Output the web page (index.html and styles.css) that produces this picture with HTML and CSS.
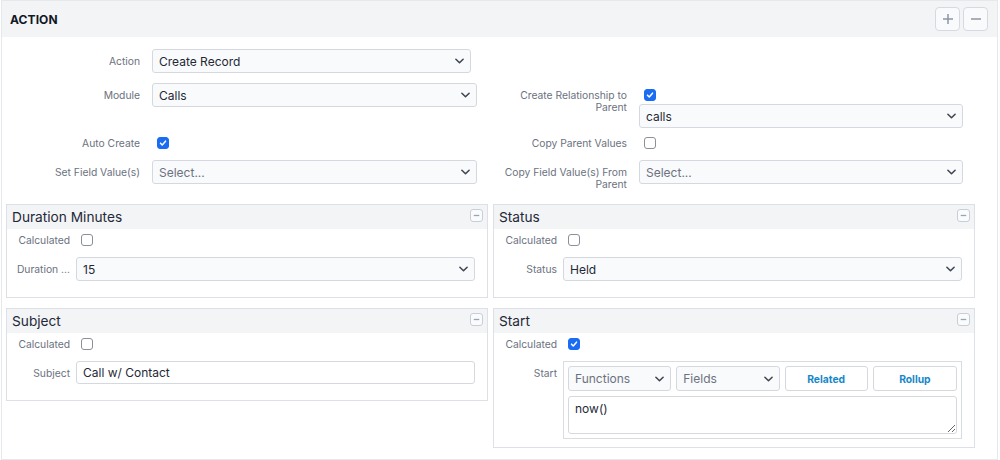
FILE: index.html
```html
<!DOCTYPE html>
<html>
<head>
<meta charset="utf-8">
<link rel="stylesheet" href="styles.css">
</head>
<body>
<div class="action">
  <div class="action-head">
    <div class="action-title">ACTION</div>
    <div class="head-btns">
      <span class="hbtn"><svg width="12" height="12" viewBox="0 0 12 12"><path d="M6 1v10M1 6h10" stroke="#8d96a5" stroke-width="1.5" fill="none"/></svg></span>
      <span class="hbtn"><svg width="12" height="12" viewBox="0 0 12 12"><path d="M1 6h10" stroke="#8d96a5" stroke-width="1.5" fill="none"/></svg></span>
    </div>
  </div>

  <div class="form">
    <div class="lbl">Action</div>
    <div class="ctl"><div class="select narrow"><span>Create Record</span><svg class="chev" viewBox="0 0 10 6"><polyline points="1,1 5,5 9,1"/></svg></div></div>
    <div></div>
    <div></div>

    <div class="lbl">Module</div>
    <div class="ctl"><div class="select"><span>Calls</span><svg class="chev" viewBox="0 0 10 6"><polyline points="1,1 5,5 9,1"/></svg></div></div>
    <div class="lbl rl">Create Relationship to Parent</div>
    <div class="ctl stack">
      <span class="cb on"><svg viewBox="0 0 12 12"><polyline points="3,6.2 5.1,8.3 9,3.8"/></svg></span>
      <div class="select after-cb"><span>calls</span><svg class="chev" viewBox="0 0 10 6"><polyline points="1,1 5,5 9,1"/></svg></div>
    </div>

    <div class="lbl">Auto Create</div>
    <div class="ctl"><span class="cb on top6"><svg viewBox="0 0 12 12"><polyline points="3,6.2 5.1,8.3 9,3.8"/></svg></span></div>
    <div class="lbl rl">Copy Parent Values</div>
    <div class="ctl"><span class="cb top6"></span></div>

    <div class="lbl">Set Field Value(s)</div>
    <div class="ctl"><div class="select"><span class="ph">Select...</span><svg class="chev" viewBox="0 0 10 6"><polyline points="1,1 5,5 9,1"/></svg></div></div>
    <div class="lbl rl">Copy Field Value(s) From Parent</div>
    <div class="ctl"><div class="select"><span class="ph">Select...</span><svg class="chev" viewBox="0 0 10 6"><polyline points="1,1 5,5 9,1"/></svg></div></div>
  </div>

  <div class="panels">
    <div class="panel simple">
      <div class="panel-head"><span class="panel-title">Duration Minutes</span><span class="mini"><svg viewBox="0 0 12 12"><path d="M3 6h6" stroke="#9aa3b0" stroke-width="1.4"/></svg></span></div>
      <div class="pbody">
        <div class="lbl tight">Calculated</div>
        <div class="ctl"><span class="cb"></span></div>
        <div class="lbl">Duration ...</div>
        <div class="ctl"><div class="select"><span>15</span><svg class="chev" viewBox="0 0 10 6"><polyline points="1,1 5,5 9,1"/></svg></div></div>
      </div>
    </div>

    <div class="panel simple">
      <div class="panel-head"><span class="panel-title">Status</span><span class="mini"><svg viewBox="0 0 12 12"><path d="M3 6h6" stroke="#9aa3b0" stroke-width="1.4"/></svg></span></div>
      <div class="pbody">
        <div class="lbl tight">Calculated</div>
        <div class="ctl"><span class="cb"></span></div>
        <div class="lbl">Status</div>
        <div class="ctl"><div class="select"><span>Held</span><svg class="chev" viewBox="0 0 10 6"><polyline points="1,1 5,5 9,1"/></svg></div></div>
      </div>
    </div>

    <div class="panel simple">
      <div class="panel-head"><span class="panel-title">Subject</span><span class="mini"><svg viewBox="0 0 12 12"><path d="M3 6h6" stroke="#9aa3b0" stroke-width="1.4"/></svg></span></div>
      <div class="pbody">
        <div class="lbl tight">Calculated</div>
        <div class="ctl"><span class="cb"></span></div>
        <div class="lbl">Subject</div>
        <div class="ctl"><div class="textinput">Call w/ Contact</div></div>
      </div>
    </div>

    <div class="panel">
      <div class="panel-head"><span class="panel-title">Start</span><span class="mini"><svg viewBox="0 0 12 12"><path d="M3 6h6" stroke="#9aa3b0" stroke-width="1.4"/></svg></span></div>
      <div class="pbody">
        <div class="lbl tight">Calculated</div>
        <div class="ctl"><span class="cb on"><svg viewBox="0 0 12 12"><polyline points="3,6.2 5.1,8.3 9,3.8"/></svg></span></div>
        <div class="lbl">Start</div>
        <div class="ctl">
          <div class="formula">
            <div class="formula-bar">
              <div class="select small"><span class="ph">Functions</span><svg class="chev" viewBox="0 0 10 6"><polyline points="1,1 5,5 9,1"/></svg></div>
              <div class="select small"><span class="ph">Fields</span><svg class="chev" viewBox="0 0 10 6"><polyline points="1,1 5,5 9,1"/></svg></div>
              <div class="fbtn">Related</div>
              <div class="fbtn">Rollup</div>
            </div>
            <textarea class="formula-text" readonly>now()</textarea>
          </div>
        </div>
      </div>
    </div>
  </div>
</div>
</body>
</html>
```

FILE: styles.css
```css
body {
  margin: 0;
  font-family: Inter, "Noto Sans", sans-serif;
  font-size: 12px;
  color: #1f2937;
  background: #ffffff;
}

.action {
  box-sizing: border-box;
  width: 997px;
  margin-left: 1px;
  border: 1px solid #e6e8ec;
  padding-bottom: 11px;
}

.action-head {
  height: 36px;
  background: #f3f4f6;
  display: flex;
  align-items: center;
  justify-content: space-between;
  padding: 0 9px 0 8px;
}

.action-title {
  font-weight: 700;
  font-size: 12px;
  color: #111827;
  letter-spacing: 0.1px;
}

.head-btns {
  display: flex;
  gap: 3px;
}

.hbtn {
  box-sizing: border-box;
  width: 25px;
  height: 24px;
  border: 1px solid #d5dae1;
  border-radius: 4px;
  background: #f9fafb;
  display: flex;
  align-items: center;
  justify-content: center;
}

/* top form */
.form {
  display: grid;
  grid-template-columns: 138px 325px 138px 324px;
  grid-template-rows: 34px 48px 29px 30px;
  column-gap: 12px;
  padding-top: 12px;
  align-items: start;
}

.lbl {
  font-size: 10.3px;
  line-height: 12px;
  color: #6b7280;
  text-align: right;
  padding-top: 6px;
  white-space: normal;
}

.lbl.rl {
  padding-left: 12px;
}

.lbl.tight {
  padding-top: 0;
}

.ctl {
  min-width: 0;
}

.stack {
  display: flex;
  flex-direction: column;
}

.select {
  box-sizing: border-box;
  height: 24px;
  border: 1px solid #d5d9df;
  border-radius: 3px;
  background: #f9fafb;
  display: flex;
  align-items: center;
  justify-content: space-between;
  padding: 0 6px 0 6px;
  font-size: 12px;
  color: #1f2937;
}

.select.narrow {
  margin-right: 6px;
}

.select.after-cb {
  margin-top: 3px;
}

.select .ph {
  color: #6b7280;
}

.chev {
  width: 9px;
  height: 6px;
  fill: none;
  stroke: #3f4652;
  stroke-width: 1.7;
  stroke-linecap: round;
  stroke-linejoin: round;
}

.cb {
  box-sizing: border-box;
  display: block;
  width: 12px;
  height: 12px;
  margin-left: 5px;
  border: 1px solid #8b9098;
  border-radius: 3px;
  background: #ffffff;
}

.stack .cb {
  margin-top: 6px;
}

.cb.top6 {
  margin-top: 6px;
}

.cb.on {
  background: #1a6cf3;
  border-color: #1a6cf3;
}

.cb svg {
  display: block;
  width: 10px;
  height: 10px;
  fill: none;
  stroke: #ffffff;
  stroke-width: 1.8;
  stroke-linecap: round;
  stroke-linejoin: round;
}

/* panels */
.panels {
  display: grid;
  grid-template-columns: 1fr 1fr;
  column-gap: 5px;
  row-gap: 10px;
  padding: 14px 22px 0 4px;
  align-items: start;
}

.panel {
  border: 1px solid #dde1e7;
}

.panel-head {
  height: 24px;
  background: #f3f4f6;
  display: flex;
  justify-content: space-between;
  align-items: flex-start;
  padding: 0 4px 0 5px;
}

.panel-title {
  font-size: 13.7px;
  line-height: 24px;
  color: #1f2937;
}

.mini {
  box-sizing: border-box;
  width: 13px;
  height: 13px;
  margin-top: 4px;
  border: 1px solid #c9ced6;
  border-radius: 3px;
  background: #fafbfc;
  display: flex;
  align-items: center;
  justify-content: center;
}

.mini svg {
  width: 11px;
  height: 11px;
}

.pbody {
  display: grid;
  grid-template-columns: 63px 1fr;
  column-gap: 6px;
  row-gap: 11px;
  padding: 5px 12px 8px 0;
  align-items: start;
}

.panel.simple .pbody {
  padding-bottom: 16px;
}

.pbody .cb {
  margin-left: 5px;
}

.textinput {
  box-sizing: border-box;
  height: 23px;
  border: 1px solid #d5d9df;
  border-radius: 3px;
  background: #ffffff;
  padding: 0 6px;
  display: flex;
  align-items: center;
  font-size: 12px;
  color: #1f2937;
}

.formula {
  border: 1px solid #d8dde4;
  padding: 4px;
  display: flex;
  flex-direction: column;
  gap: 5px;
}

.formula-bar {
  display: grid;
  grid-template-columns: 103fr 103fr 83fr 84fr;
  column-gap: 5px;
}

.select.small {
  height: 25px;
}

.fbtn {
  box-sizing: border-box;
  height: 25px;
  border: 1px solid #d5d9df;
  border-radius: 3px;
  background: #ffffff;
  display: flex;
  align-items: center;
  justify-content: center;
  font-size: 10.3px;
  font-weight: 700;
  color: #1688c9;
}

.formula-text {
  box-sizing: border-box;
  display: block;
  width: 100%;
  height: 38px;
  margin: 0;
  border: 1px solid #d5d9df;
  border-radius: 3px;
  background: #ffffff;
  padding: 5px 6px;
  font-family: Inter, "Noto Sans", sans-serif;
  font-size: 12px;
  line-height: 14px;
  color: #1f2937;
  resize: both;
  outline: none;
}
```
